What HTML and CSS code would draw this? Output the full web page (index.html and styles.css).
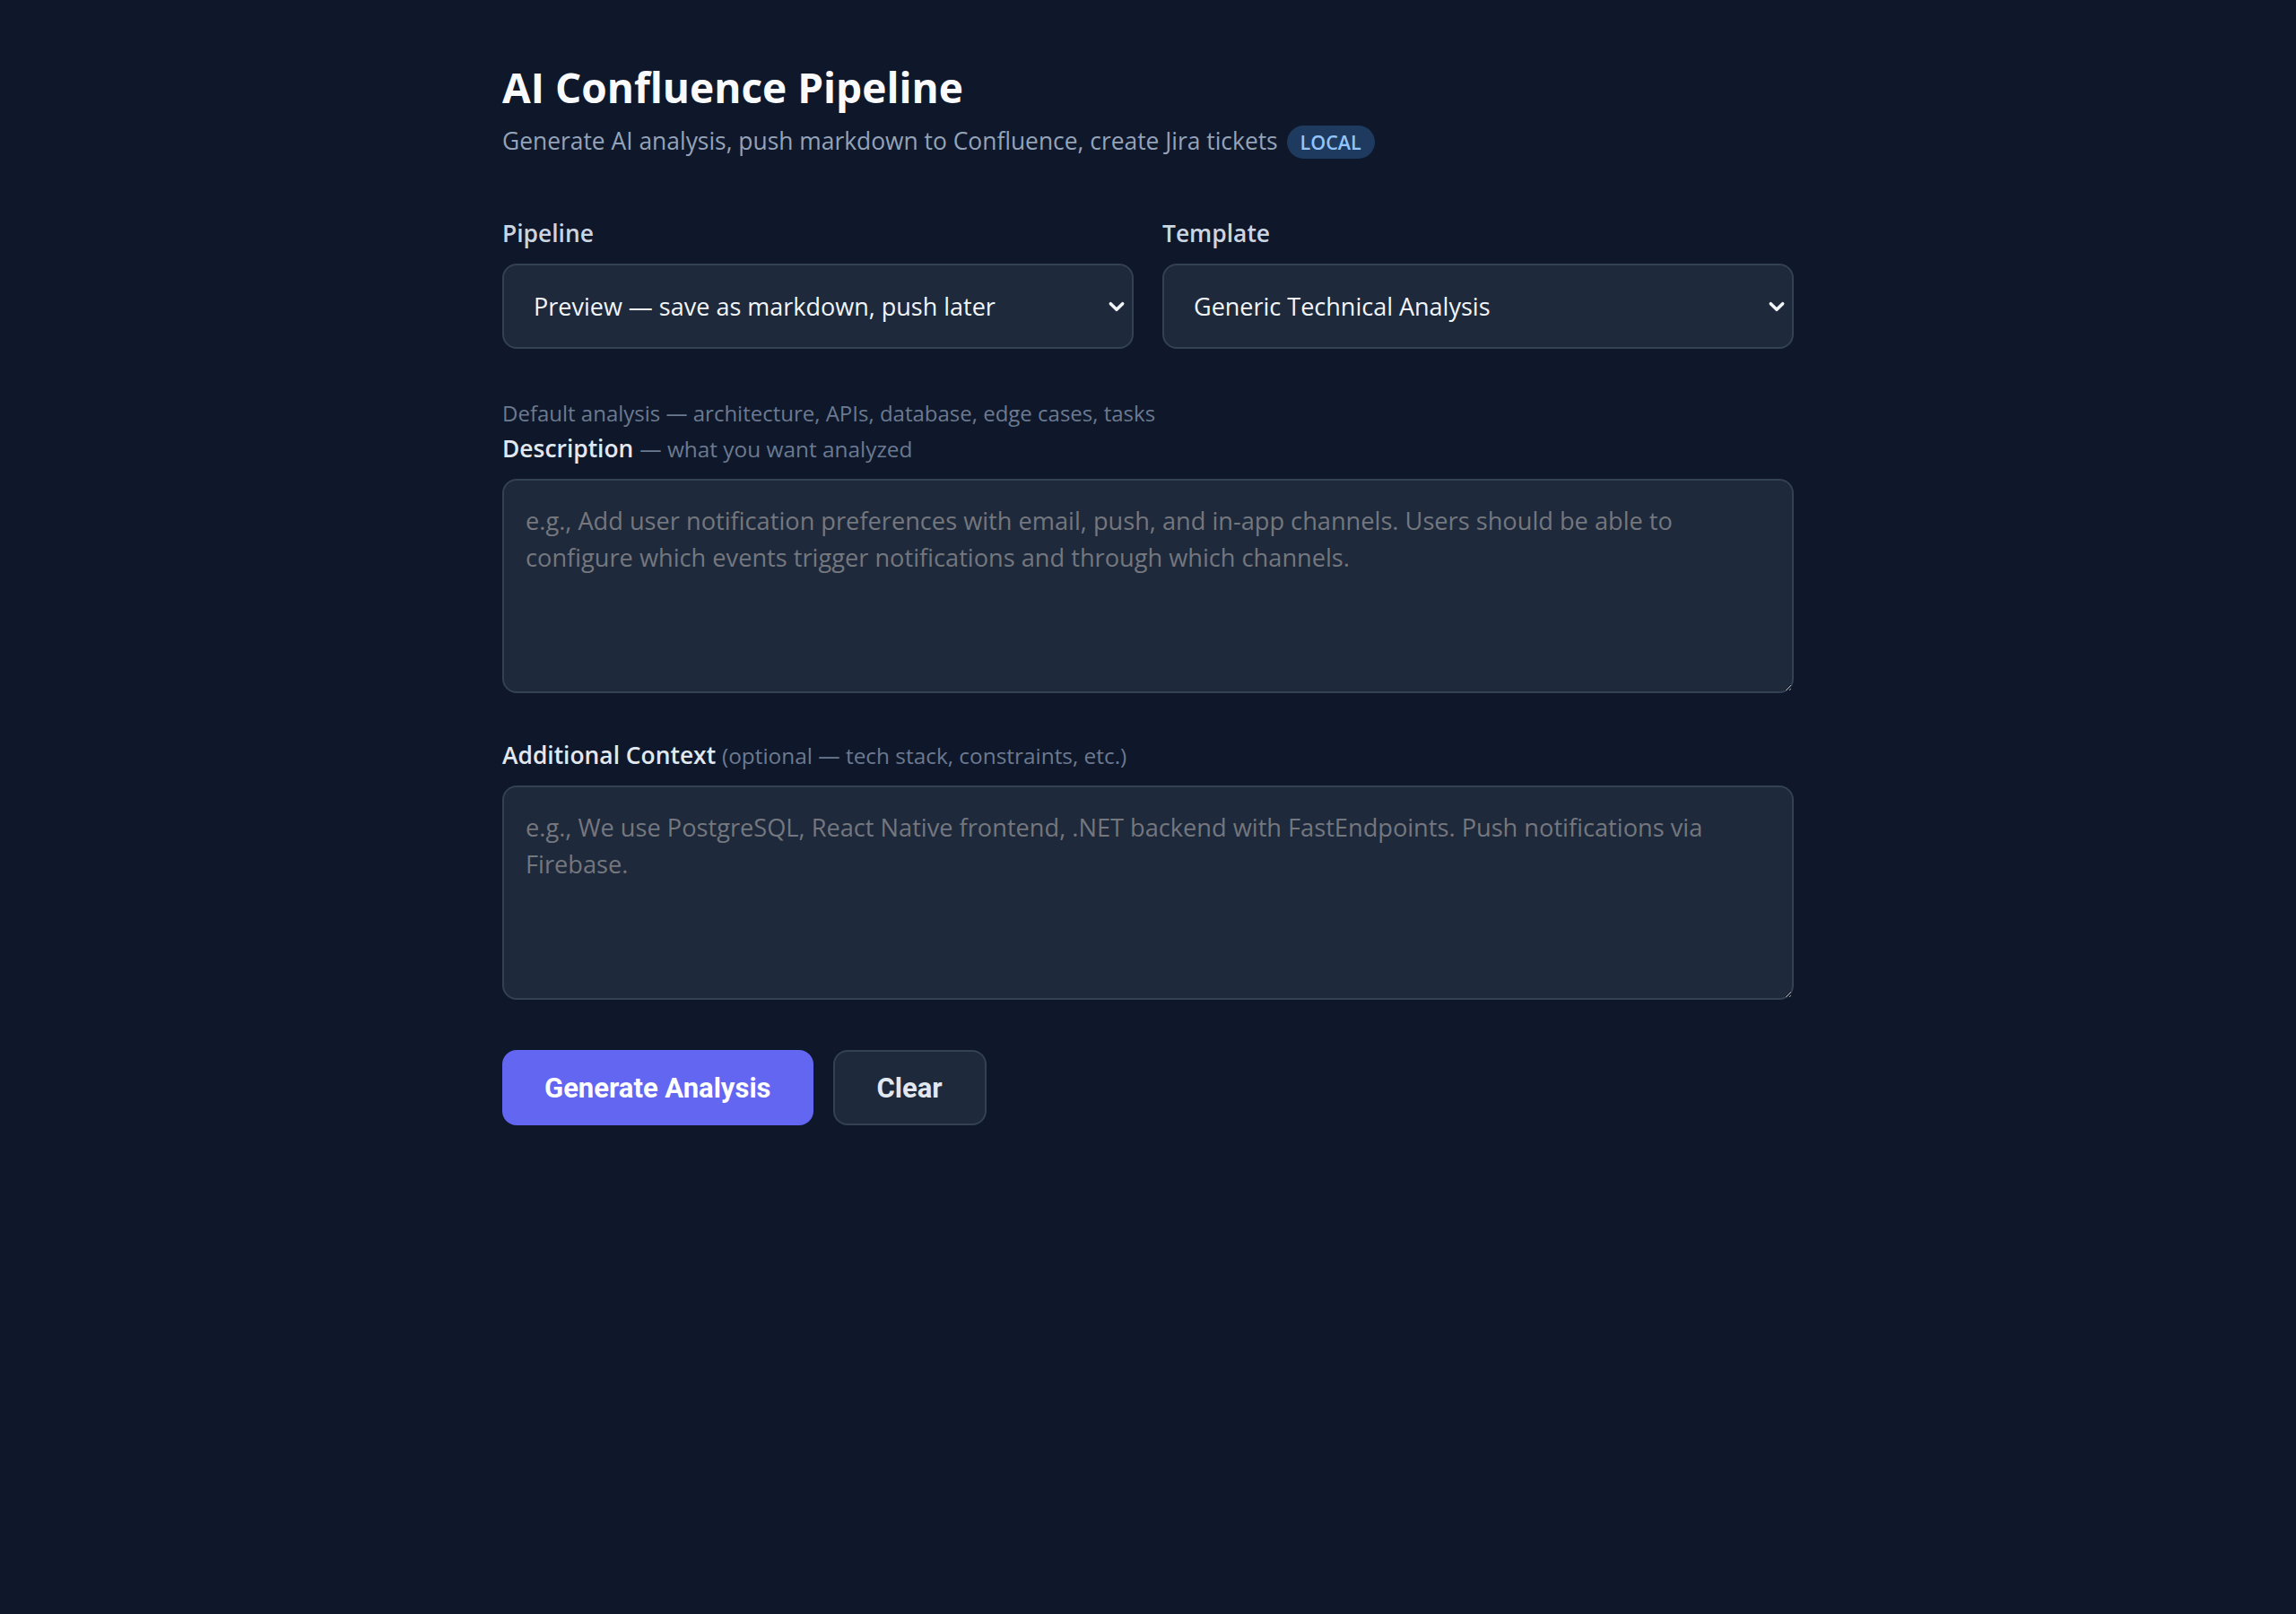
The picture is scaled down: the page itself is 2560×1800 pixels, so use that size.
FILE: index.html
```html
<!DOCTYPE html>
<html lang="en">
<head>
<meta charset="utf-8">
<title>AI Confluence Pipeline</title>
<link rel="stylesheet" href="styles.css">
</head>
<body>
<main class="page">
  <header class="header">
    <h1 class="title">AI Confluence Pipeline</h1>
    <p class="subtitle">Generate AI analysis, push markdown to Confluence, create Jira tickets <span class="badge">LOCAL</span></p>
  </header>

  <div class="row">
    <div class="field">
      <label class="label" for="pipeline">Pipeline</label>
      <div class="select-wrap">
        <select class="select" id="pipeline">
          <option>Preview — save as markdown, push later</option>
          <option>Full — push to Confluence and create Jira tickets</option>
        </select>
        <svg class="chev" viewBox="0 0 18 12" aria-hidden="true"><polyline points="3,3 9,9 15,3" fill="none" stroke="#f1f5f9" stroke-width="3.2" stroke-linecap="round" stroke-linejoin="round"/></svg>
      </div>
    </div>
    <div class="field">
      <label class="label" for="template">Template</label>
      <div class="select-wrap">
        <select class="select" id="template">
          <option>Generic Technical Analysis</option>
        </select>
        <svg class="chev" viewBox="0 0 18 12" aria-hidden="true"><polyline points="3,3 9,9 15,3" fill="none" stroke="#f1f5f9" stroke-width="3.2" stroke-linecap="round" stroke-linejoin="round"/></svg>
      </div>
    </div>
  </div>

  <p class="hint">Default analysis — architecture, APIs, database, edge cases, tasks</p>

  <div class="field">
    <label class="label label-strong" for="desc">Description <span class="muted">— what you want analyzed</span></label>
    <textarea class="textarea" id="desc" placeholder="e.g., Add user notification preferences with email, push, and in-app channels. Users should be able to configure which events trigger notifications and through which channels."></textarea>
  </div>

  <div class="field field-ctx">
    <label class="label label-strong" for="ctx">Additional Context <span class="muted">(optional — tech stack, constraints, etc.)</span></label>
    <textarea class="textarea" id="ctx" placeholder="e.g., We use PostgreSQL, React Native frontend, .NET backend with FastEndpoints. Push notifications via Firebase."></textarea>
  </div>

  <div class="actions">
    <button class="btn btn-primary" type="button">Generate Analysis</button>
    <button class="btn btn-secondary" type="button">Clear</button>
  </div>
</main>
</body>
</html>
```

FILE: styles.css
```css
* { box-sizing: border-box; }

html, body {
  margin: 0;
  background: #0f172a;
}

body {
  font-family: "Open Sans", "Noto Sans", sans-serif;
  color: #e2e8f0;
  min-height: 1800px;
}

.page {
  width: 1440px;
  margin: 0 auto;
  padding-top: 70px;
}

.header {
  margin-bottom: 63px;
}

.title {
  margin: 0 0 13px;
  font-size: 46px;
  line-height: 55px;
  font-weight: 700;
  color: #f8fafc;
}

.subtitle {
  margin: 0;
  font-size: 26.4px;
  line-height: 39px;
  color: #94a3b8;
}

.badge {
  display: inline-block;
  vertical-align: middle;
  margin-left: 3px;
  padding: 0 15px;
  height: 37px;
  line-height: 37px;
  border-radius: 999px;
  background: #1e3a5f;
  color: #93c5fd;
  font-size: 21.5px;
  font-weight: 600;
  position: relative;
  top: -1px;
}

.row {
  display: grid;
  grid-template-columns: 1fr 1fr;
  gap: 32px;
}

.field {
  display: flex;
  flex-direction: column;
}

.label {
  display: block;
  margin-bottom: 14px;
  font-size: 26.4px;
  line-height: 39px;
  font-weight: 600;
  color: #cbd5e1;
}

.label-strong {
  color: #e2e8f0;
}

.muted {
  font-size: 24.4px;
  font-weight: 400;
  color: #6b7a90;
}

.select-wrap {
  position: relative;
}

.select {
  appearance: none;
  -webkit-appearance: none;
  display: block;
  width: 100%;
  height: 95px;
  padding: 0 60px 0 33px;
  background: #1e293b;
  border: 2px solid #334155;
  border-radius: 16px;
  color: #f1f5f9;
  font-family: "Open Sans", "Noto Sans", sans-serif;
  font-size: 27px;
  outline: none;
}

.chev {
  position: absolute;
  right: 9px;
  top: 50%;
  width: 20px;
  height: 14px;
  margin-top: -7px;
  pointer-events: none;
}

.hint {
  margin: 54px 0 2px;
  font-size: 24px;
  line-height: 36px;
  color: #6b7a90;
}

.textarea {
  display: block;
  width: 100%;
  height: 239px;
  padding: 24px;
  background: #1e293b;
  border: 2px solid #334155;
  border-radius: 16px;
  color: #f1f5f9;
  font-family: "Open Sans", "Noto Sans", sans-serif;
  font-size: 27.2px;
  line-height: 41px;
  resize: vertical;
  outline: none;
}

.textarea::placeholder {
  color: #74777e;
}

.field-ctx {
  margin-top: 50px;
}

.actions {
  display: flex;
  gap: 22px;
  margin-top: 56px;
}

.btn {
  height: 84px;
  padding: 0 47px;
  border-radius: 16px;
  font-family: Roboto, "Liberation Sans", sans-serif;
  font-size: 31px;
  font-weight: 700;
  cursor: pointer;
}

.btn-primary {
  background: #6366f1;
  border: none;
  color: #ffffff;
}

.btn-secondary {
  background: #1e293b;
  border: 2px solid #334155;
  color: #e2e8f0;
}
```
